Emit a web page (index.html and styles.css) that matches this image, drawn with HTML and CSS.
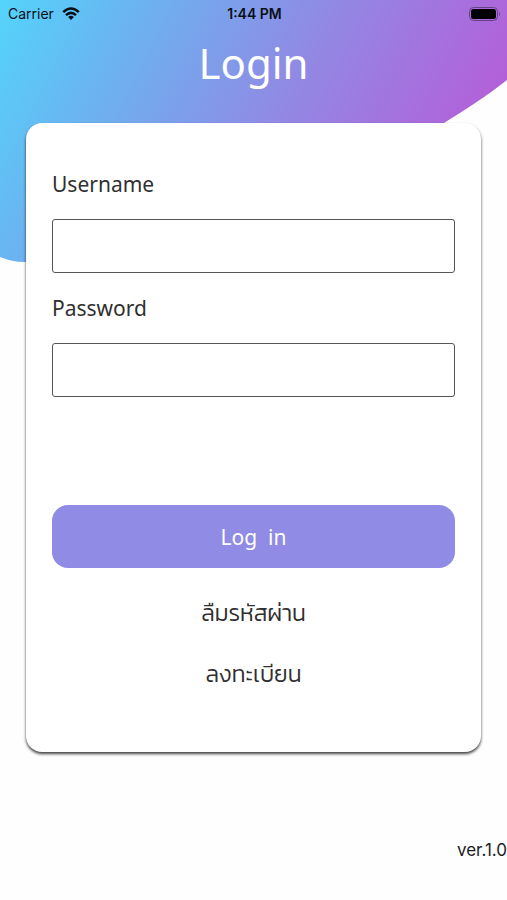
FILE: index.html
```html
<!DOCTYPE html>
<html lang="th">
<head>
<meta charset="utf-8">
<meta name="viewport" content="width=device-width, initial-scale=1">
<title>Login</title>
<link rel="stylesheet" href="styles.css">
</head>
<body>
<div class="screen">
  <svg class="backdrop" viewBox="0 0 507 270" preserveAspectRatio="none" aria-hidden="true">
    <defs>
      <linearGradient id="sky" gradientUnits="userSpaceOnUse" x1="0" y1="0" x2="440" y2="220">
        <stop offset="0" stop-color="#54d4fb"/>
        <stop offset="0.25" stop-color="#6ab4f1"/>
        <stop offset="0.6" stop-color="#908ae4"/>
        <stop offset="1" stop-color="#b45fd8"/>
      </linearGradient>
    </defs>
    <path fill="url(#sky)" d="M0 0H507V80C487 96 466 109 444 123L250 220C150 250 60 262 24 262Q12 262 0 257Z"/>
  </svg>
  <header class="status">
    <div class="carrier">
      <span>Carrier</span>
      <svg width="18" height="14" viewBox="0 0 18 14" aria-hidden="true">
        <g fill="none" stroke="#0a0f18" stroke-width="2.5">
          <path d="M1.2 5.1Q9 -2.1 16.8 5.1"/>
          <path d="M4 8.2Q9 3.6 14 8.2"/>
        </g>
        <path fill="#0a0f18" d="M9 13L6.1 10.1Q9 7.5 11.9 10.1Z"/>
      </svg>
    </div>
    <span class="time">1:44 PM</span>
    <svg class="battery" width="32" height="14" viewBox="0 0 32 14" aria-hidden="true">
      <rect x="0.5" y="0.5" width="28" height="13" rx="4" fill="none" stroke="#65418a"/>
      <rect x="2" y="2" width="25" height="10" rx="2.5" fill="#000"/>
      <path fill="#65418a" d="M30 4.7Q32 7 30 9.3Z"/>
    </svg>
  </header>
  <h1 class="title">Login</h1>
  <form class="card">
    <label class="label" for="username">Username</label>
    <input class="field" id="username" type="text">
    <label class="label" for="password">Password</label>
    <input class="field" id="password" type="password">
    <button class="submit" type="button">Log&nbsp; in</button>
    <a class="link" href="#">ลืมรหัสผ่าน</a>
    <a class="link" href="#">ลงทะเบียน</a>
  </form>
  <footer class="version">ver.1.0</footer>
</div>
</body>
</html>
```
FILE: styles.css
```css
* {
  box-sizing: border-box;
}

body {
  margin: 0;
  background: #fefefe;
  color: #303030;
  font-family: "Noto Sans", "Kanit", "Noto Sans Thai", sans-serif;
}

.screen {
  position: relative;
  display: flex;
  flex-direction: column;
  min-height: 100vh;
}

.backdrop {
  position: absolute;
  top: 0;
  left: 0;
  z-index: -1;
  width: 100%;
  height: 270px;
}

.status {
  display: grid;
  grid-template-columns: 1fr auto 1fr;
  align-items: center;
  height: 28px;
  padding: 0 6px 0 8px;
  color: #0a0f18;
  font: 14px/28px Inter, sans-serif;
}

.carrier {
  display: flex;
  align-items: center;
  gap: 8px;
}

.time {
  font-weight: 600;
}

.battery {
  justify-self: end;
}

.title {
  margin: 0;
  color: #fff;
  font-size: 42px;
  font-weight: 400;
  line-height: 70px;
  text-align: center;
}

.card {
  display: flex;
  flex-direction: column;
  margin: 25px 26px 0;
  padding: 38px 26px 48px;
  border-radius: 16px;
  background: #fff;
  box-shadow: 0 2px 3px rgba(0, 0, 0, 0.75);
}

.label {
  font-size: 21px;
  line-height: 46px;
}

.field {
  width: 100%;
  height: 54px;
  margin: 12px 0;
  padding: 0 12px;
  border: 1px solid #555;
  border-radius: 3px;
  background: #fff;
  color: inherit;
  font: inherit;
  font-size: 21px;
}

.submit {
  height: 63px;
  margin: 96px 0 14px;
  border: 0;
  border-radius: 16px;
  background: #908be4;
  color: #fff;
  font: inherit;
  font-size: 21px;
}

.link {
  color: inherit;
  font-size: 23px;
  font-weight: 300;
  line-height: 61px;
  text-align: center;
  text-decoration: none;
}

.version {
  margin-top: auto;
  padding-bottom: 36px;
  color: #1c1c1c;
  font: 17px/28px Inter, sans-serif;
  text-align: right;
}
```
